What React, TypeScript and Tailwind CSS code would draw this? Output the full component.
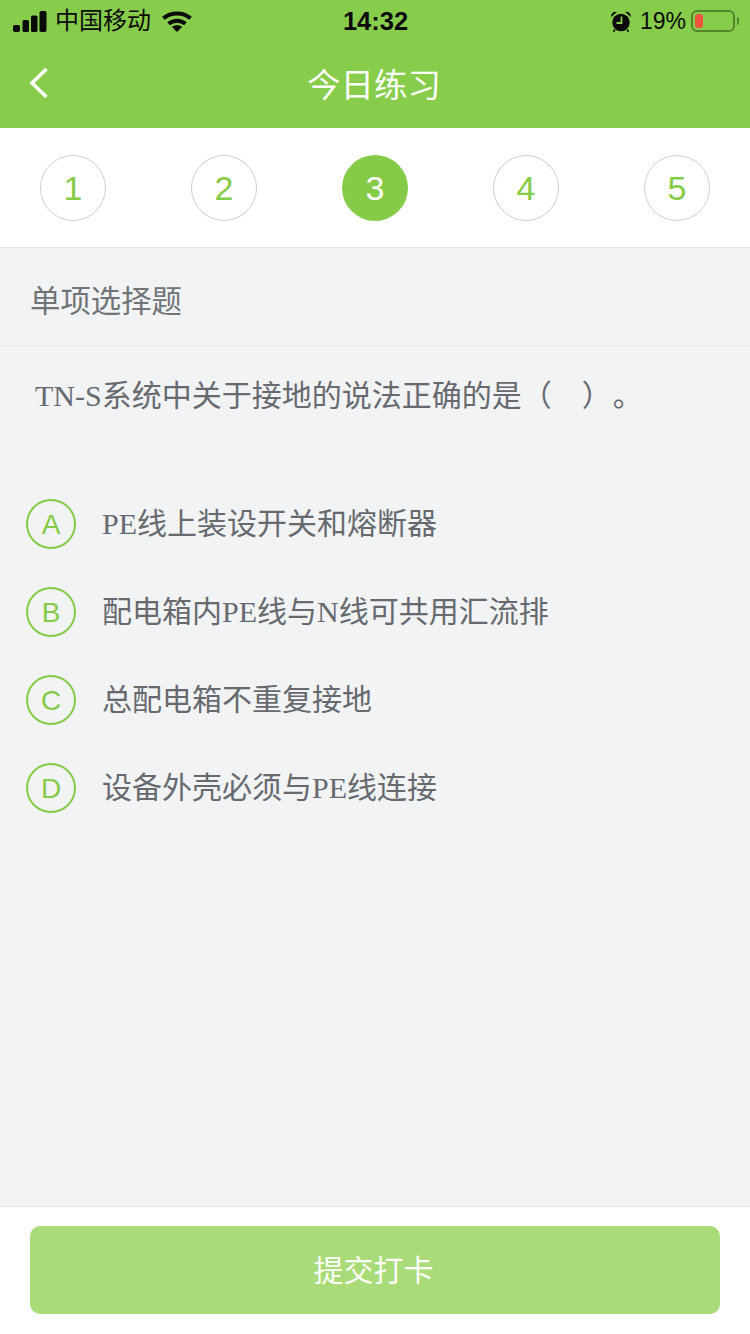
const SANS = "font-['Liberation_Sans','Noto_Sans_CJK_SC',sans-serif]";

function Signal() {
  return (
    <svg width="34" height="21" viewBox="0 0 34 21" fill="#0b0b0b">
      <rect x="0" y="14" width="7" height="7" rx="1.800" />
      <rect x="9.500" y="9" width="6.500" height="12" rx="1.500" />
      <rect x="18" y="4.500" width="6.500" height="16.500" rx="1.500" />
      <rect x="26.500" y="0" width="7" height="21" rx="1.800" />
    </svg>
  );
}

function Wifi() {
  return (
    <svg width="30" height="21" viewBox="0 0 30 21" fill="none" stroke="#0b0b0b" strokeWidth="4">
      <path d="M1.400 7.300C9 0.800 21 0.800 28.600 7.300" />
      <path d="M6.600 12.700C11.500 8.600 18.500 8.600 23.400 12.700" />
      <path d="M15 21L9.800 15.800C12.600 13.700 17.400 13.700 20.200 15.800Z" fill="#0b0b0b" stroke="none" />
    </svg>
  );
}

function Alarm() {
  return (
    <svg width="20" height="21" viewBox="0 0 20 21" fill="#0b0b0b">
      <circle cx="10" cy="11.500" r="8.700" />
      <path d="M0.300 6C-0.300 2.300 2.500 0 6 0.800Z" />
      <path d="M19.700 6C20.300 2.300 17.500 0 14 0.800Z" />
      <path d="M4 18.500L2.500 20.800M16 18.500L17.500 20.800" stroke="#0b0b0b" strokeWidth="1.600" />
      <path d="M10.500 5.500V12H5.500" stroke="#87cd4b" strokeWidth="1.800" fill="none" />
    </svg>
  );
}

function Battery() {
  return (
    <div className="flex items-center gap-[2px]">
      <div className="w-[44px] h-[22px] rounded-[6px] border-2 border-[#55842f] p-[2px] flex">
        <div className="w-[8px] h-full rounded-[3px] bg-[#f0533f]" />
      </div>
      <div className="w-[2px] h-[8px] rounded-r-[2px] bg-[#55842f]" />
    </div>
  );
}

function Step({ n, active }: { n: number; active?: boolean }) {
  return (
    <div
      className={
        active
          ? `w-[66px] h-[66px] rounded-full bg-[#85cb48] text-white flex items-center justify-center text-[34px] ${SANS}`
          : `w-[66px] h-[66px] rounded-full border border-[#cfcfcf] bg-white text-[#85cb48] flex items-center justify-center text-[34px] ${SANS}`
      }
    >
      {n}
    </div>
  );
}

function Option({ letter, text }: { letter: string; text: string }) {
  return (
    <div className="h-[88px] flex items-center pl-[26px]">
      <div className={`w-[50px] h-[50px] rounded-full border-2 border-[#85cb48] text-[#85cb48] flex items-center justify-center pt-[2px] text-[28px] shrink-0 ${SANS}`}>
        {letter}
      </div>
      <div className="ml-[26px] text-[30px] leading-[40px] text-[#666a6e]">{text}</div>
    </div>
  );
}

export default function App() {
  return (
    <div className="w-[750px] h-[1334px] flex flex-col bg-[#f2f3f5] overflow-hidden font-['Liberation_Serif','Noto_Sans_CJK_SC',serif]">
      <div className="bg-[#87cd4b] h-[128px] shrink-0 flex flex-col">
        <div className={`h-[40px] pt-[2px] flex items-center justify-between pl-[13px] pr-[11px] text-[#0b0b0b] ${SANS}`}>
          <div className="flex items-center w-[260px]">
            <Signal />
            <span className="ml-[8px] text-[24px] leading-[30px]">中国移动</span>
            <span className="ml-[11px]"><Wifi /></span>
          </div>
          <div className="text-[25.500px] font-bold leading-[30px] mr-[1px]">14:32</div>
          <div className="flex items-center justify-end w-[260px]">
            <Alarm />
            <span className="ml-[9px] mr-[5px] text-[23px] leading-[30px]">19%</span>
            <Battery />
          </div>
        </div>
        <div className={`relative flex-1 flex items-center justify-center pt-[4px] ${SANS}`}>
          <svg className="absolute left-[28px] top-[26px]" width="22" height="34" viewBox="0 0 22 34" fill="none" stroke="#ffffff" strokeWidth="3.600">
            <path d="M18.500 3L4 17L18.500 31" />
          </svg>
          <span className="text-white text-[33.500px] leading-[44px] mr-[2px]">今日练习</span>
        </div>
      </div>

      <div className="h-[120px] shrink-0 bg-white border-b border-[#e8e8e8] pt-[27px] px-[40px] flex justify-between items-start">
        <Step n={1} />
        <Step n={2} />
        <Step n={3} active />
        <Step n={4} />
        <Step n={5} />
      </div>

      <div className={`h-[98px] shrink-0 border-b border-[#e8e9eb] flex items-center pl-[30px] pt-[11px] text-[30.400px] text-[#707477] ${SANS}`}>
        单项选择题
      </div>

      <div className="flex-1 flex flex-col">
        <div className="pl-[35px] pt-[30px] text-[30px] leading-[40px] text-[#666a6e]">
          TN-S系统中关于接地的说法正确的是（　）<span className="ml-[16px]">。</span>
        </div>
        <div className="mt-[64px] flex flex-col">
          <Option letter="A" text="PE线上装设开关和熔断器" />
          <Option letter="B" text="配电箱内PE线与N线可共用汇流排" />
          <Option letter="C" text="总配电箱不重复接地" />
          <Option letter="D" text="设备外壳必须与PE线连接" />
        </div>
      </div>

      <div className="h-[128px] shrink-0 bg-white border-t border-[#e8e8e8] pt-[19px] px-[30px]">
        <div className={`h-[88px] rounded-[10px] bg-[#a9dc78] flex items-center justify-center text-white text-[30px] pr-[3px] ${SANS}`}>
          提交打卡
        </div>
      </div>
    </div>
  );
}
